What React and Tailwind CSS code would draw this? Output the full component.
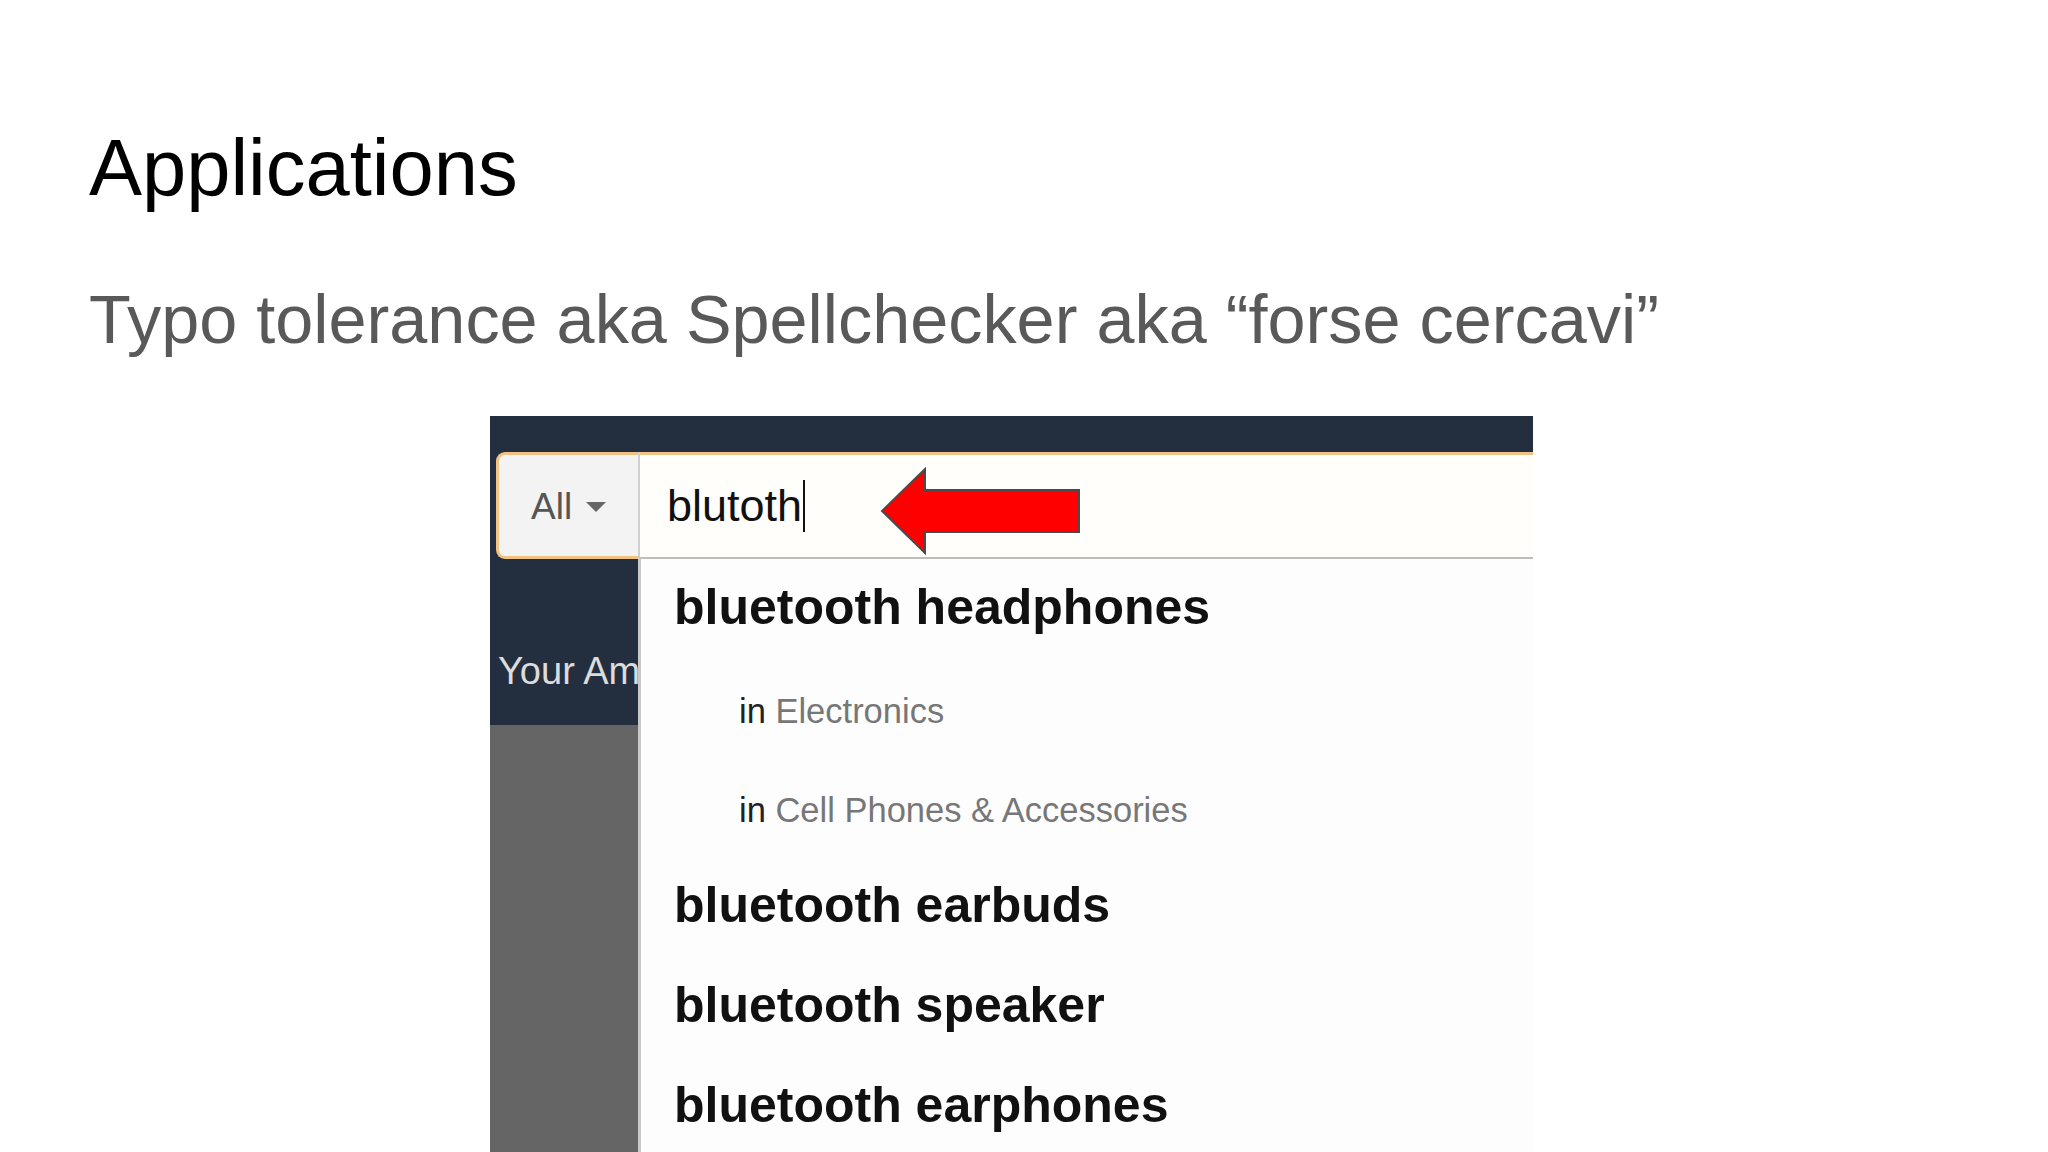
import React from 'react'

const font = { fontFamily: '"Liberation Sans", Arial, sans-serif' }

const suggestions = [
  { kind: 'main', text: 'bluetooth headphones' },
  { kind: 'sub', dept: 'Electronics' },
  { kind: 'sub', dept: 'Cell Phones & Accessories' },
  { kind: 'main', text: 'bluetooth earbuds' },
  { kind: 'main', text: 'bluetooth speaker' },
  { kind: 'main', text: 'bluetooth earphones' },
]

const RedArrow = () => (
  <svg width="202" height="88" viewBox="0 0 202 88" className="absolute left-[240px] top-[12px]">
    <polygon
      points="2,44 45,2 45,23 199,23 199,65 45,65 45,86"
      fill="#ff0000"
      stroke="#4a4a4a"
      strokeWidth="2"
      strokeLinejoin="miter"
    />
  </svg>
)

const SearchBar = () => (
  <div className="flex h-[107px] bg-[#232f3e] pl-[6px]">
    {/* department select */}
    <div className="flex w-[142px] items-center rounded-l-[9px] border-y-[3px] border-l-[3px] border-[#f1c283] bg-[#f3f3f3] pl-[32px] pt-[2px]">
      <span className="text-[37px] leading-none text-[#555]">All</span>
      <svg width="20" height="10" viewBox="0 0 20 10" className="ml-[14px] mt-[2px]">
        <polygon points="0,0 20,0 10,10" fill="#666" />
      </svg>
    </div>
    <div className="w-[2px] bg-[#cfcfcf]" />
    {/* input */}
    <div className="relative flex flex-1 items-center border-t-[3px] border-b-[2px] border-t-[#f1c283] border-b-[#bdbdbd] bg-[#fffefb] pl-[27px]">
      <span className="text-[45px] leading-none text-[#111]">blutoth</span>
      <span className="ml-[1px] h-[52px] w-[2px] bg-[#111]" />
      <RedArrow />
    </div>
  </div>
)

const Dropdown = () => (
  <div className="flex-1 border-l-[3px] border-[#c9c9c9] bg-[#fdfdfd]">
    {suggestions.map((s, i) =>
      s.kind === 'main' ? (
        <div key={i} className="flex h-[99.6px] items-center pb-[4px] pl-[33px]">
          <span className="text-[50px] font-bold leading-none text-[#111]">{s.text}</span>
        </div>
      ) : (
        <div key={i} className="flex h-[99.6px] items-center pt-[5px] pl-[98px]">
          <span className="text-[34.5px] leading-none">
            <span className="text-[#222]">in </span>
            <span className="text-[#777]">{s.dept}</span>
          </span>
        </div>
      )
    )}
  </div>
)

export default function App() {
  return (
    <div className="h-[1152px] w-[2048px] overflow-hidden bg-white" style={font}>
      <div className="pl-[89px] pt-[128px]">
        <h1 className="text-[79.5px] font-normal leading-none text-black">Applications</h1>
        <p className="mt-[77px] text-[68.4px] leading-none text-[#595959]">
          Typo tolerance aka Spellchecker aka “forse cercavi”
        </p>
      </div>

      {/* screenshot of the search box */}
      <div className="ml-[490px] mt-[63px] w-[1043px]">
        <div className="h-[36px] bg-[#232f3e]" />
        <SearchBar />
        <div className="flex h-[700px]">
          <div className="flex w-[148px] flex-col">
            <div className="h-[166px] overflow-hidden whitespace-nowrap bg-[#232f3e] pl-[8px] pt-[93px]">
              <span className="text-[38px] leading-none text-[#dcdcdc]">Your Am</span>
            </div>
            <div className="flex-1 bg-[#656565]" />
          </div>
          <Dropdown />
        </div>
      </div>
    </div>
  )
}
